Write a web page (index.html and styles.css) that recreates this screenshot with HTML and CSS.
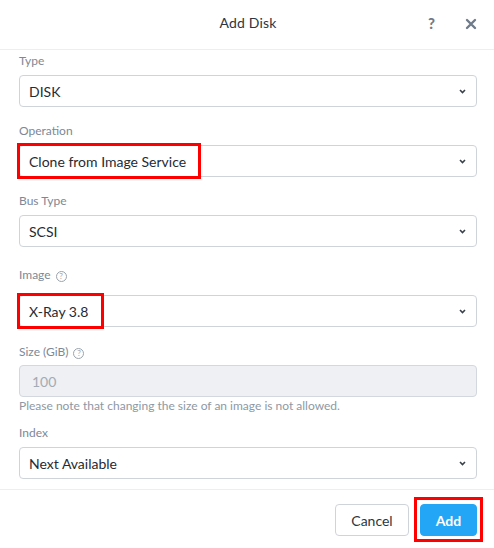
FILE: index.html
```html
<!DOCTYPE html>
<html lang="en">
<head>
<meta charset="utf-8">
<title>Add Disk</title>
<link rel="stylesheet" href="styles.css">
</head>
<body>
<div class="dialog">
  <header class="dlg-head">
    <h1 class="dlg-title">Add Disk</h1>
    <div class="dlg-actions">
      <span class="head-help">?</span>
      <svg class="head-close" width="12" height="12" viewBox="0 0 12 12"><path d="M2 2 L10 10 M10 2 L2 10" stroke="#6f7b8b" stroke-width="2.4" stroke-linecap="round"/></svg>
    </div>
  </header>

  <main class="dlg-body">
    <div class="field">
      <div class="field-label">Type</div>
      <div class="select"><span>DISK</span><svg class="chev" width="7" height="5" viewBox="0 0 7 5"><path d="M1 1 L3.5 3.5 L6 1" fill="none" stroke="#39404a" stroke-width="1.6"/></svg></div>
    </div>

    <div class="field">
      <div class="field-label">Operation</div>
      <div class="select"><span>Clone from Image Service</span><svg class="chev" width="7" height="5" viewBox="0 0 7 5"><path d="M1 1 L3.5 3.5 L6 1" fill="none" stroke="#39404a" stroke-width="1.6"/></svg>
        <div class="annot annot-op"></div>
      </div>
    </div>

    <div class="field">
      <div class="field-label">Bus Type</div>
      <div class="select"><span>SCSI</span><svg class="chev" width="7" height="5" viewBox="0 0 7 5"><path d="M1 1 L3.5 3.5 L6 1" fill="none" stroke="#39404a" stroke-width="1.6"/></svg></div>
    </div>

    <div class="field field-image">
      <div class="field-label">Image <span class="qhelp">?</span></div>
      <div class="select"><span>X-Ray 3.8</span><svg class="chev" width="7" height="5" viewBox="0 0 7 5"><path d="M1 1 L3.5 3.5 L6 1" fill="none" stroke="#39404a" stroke-width="1.6"/></svg>
        <div class="annot annot-img"></div>
      </div>
    </div>

    <div class="field field-size">
      <div class="field-label">Size (GiB) <span class="qhelp">?</span></div>
      <div class="input-disabled">100</div>
      <div class="hint">Please note that changing the size of an image is not allowed.</div>
    </div>

    <div class="field field-index">
      <div class="field-label">Index</div>
      <div class="select"><span>Next Available</span><svg class="chev" width="7" height="5" viewBox="0 0 7 5"><path d="M1 1 L3.5 3.5 L6 1" fill="none" stroke="#39404a" stroke-width="1.6"/></svg></div>
    </div>
  </main>

  <footer class="dlg-foot">
    <button class="btn btn-cancel">Cancel</button>
    <div class="add-wrap">
      <button class="btn btn-add">Add</button>
      <div class="annot annot-add"></div>
    </div>
  </footer>
</div>
</body>
</html>
```

FILE: styles.css
```css
* { box-sizing: border-box; }
html, body {
  margin: 0;
  padding: 0;
  background: #ffffff;
}
body {
  font-family: Lato, "Open Sans", "Liberation Sans", sans-serif;
  color: #2a3039;
}
.dialog {
  width: 494px;
  height: 548px;
  background: #fff;
  display: flex;
  flex-direction: column;
}
.dlg-head {
  height: 50px;
  border-bottom: 1px solid #eceef1;
  display: flex;
  align-items: center;
  justify-content: center;
  position: relative;
}
.dlg-title {
  margin: 0;
  font-size: 14px;
  font-weight: 400;
  color: #2f353d;
  letter-spacing: 0.15px;
  padding-bottom: 4px;
  padding-left: 2px;
}
.dlg-actions {
  position: absolute;
  right: 17px;
  top: 14px;
  display: flex;
  align-items: center;
  gap: 30px;
}
.head-help {
  font-size: 15px;
  font-weight: 900;
  color: #6f7b8b;
  line-height: 18px;
}
.head-close { display: block; margin-top: 1px; }

.dlg-body {
  padding: 3px 17px 0 19px;
  display: flex;
  flex-direction: column;
}
.field {
  display: flex;
  flex-direction: column;
  margin-bottom: 16px;
}
.field-label {
  font-size: 12px;
  line-height: 16px;
  color: #7d8896;
  margin-bottom: 6px;
  display: flex;
  align-items: center;
  gap: 5px;
}
.qhelp {
  display: inline-flex;
  width: 11px;
  height: 11px;
  border: 1px solid #9aa3ae;
  border-radius: 50%;
  font-size: 8px;
  line-height: 1;
  color: #9aa3ae;
  align-items: center;
  justify-content: center;
  margin-top: 2px;
}
.select {
  position: relative;
  height: 32px;
  border: 1px solid #cfd4da;
  border-radius: 4px;
  display: flex;
  align-items: center;
  justify-content: space-between;
  padding: 0 10px 0 9px;
  font-size: 14px;
  color: #262b33;
}
.chev { display: block; }
.field-image { margin-top: 4px; }
.field-image .field-label { margin-bottom: 12px; }
.field-size { margin-top: 1px; margin-bottom: 11px; }
.field-size .field-label { margin-bottom: 5px; }
.input-disabled {
  height: 32px;
  border: 1px solid #d3d8de;
  border-radius: 4px;
  background: #eef0f3;
  display: flex;
  align-items: center;
  padding-left: 12px;
  font-size: 14px;
  color: #a3abb5;
}
.hint {
  margin-top: 1px;
  font-size: 12px;
  line-height: 16px;
  color: #8e98a4;
}
.field-index { margin-bottom: 0; }

.annot {
  position: absolute;
  border: 3px solid #ff0000;
  pointer-events: none;
}
.annot-op { left: -3px; top: -3px; width: 184px; height: 36px; }
.annot-img { left: -3px; top: -3px; width: 87px; height: 36px; }

.dlg-foot {
  margin-top: 10px;
  border-top: 1px solid #eceef1;
  display: flex;
  justify-content: flex-end;
  align-items: center;
  gap: 11px;
  padding: 14px 17px 0 0;
}
.btn {
  height: 32px;
  border-radius: 4px;
  font-family: Lato, "Open Sans", "Liberation Sans", sans-serif;
  font-size: 14px;
  cursor: pointer;
}
.btn-cancel {
  width: 74px;
  background: #fff;
  border: 1px solid #cfd4da;
  color: #2f353d;
}
.add-wrap { position: relative; }
.btn-add {
  display: block;
  width: 57px;
  background: #22a6f5;
  border: 1px solid #22a6f5;
  color: #fff;
  font-weight: 700;
}
.annot-add { left: -6px; top: -7px; width: 69px; height: 45px; }
```
